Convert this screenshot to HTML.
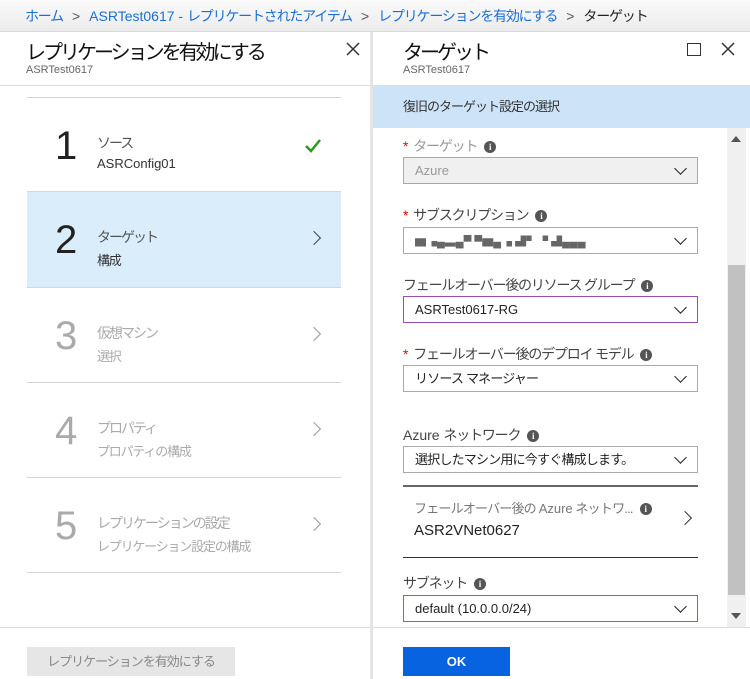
<!DOCTYPE html><html><head><meta charset="utf-8"><style>
*{box-sizing:border-box;margin:0;padding:0}
body{width:750px;height:679px;overflow:hidden;background:#fff;font-family:"Segoe UI","Liberation Sans","Noto Sans CJK JP",sans-serif;position:relative;color:#222}
.a{position:absolute}
.bc{left:0;top:0;width:750px;height:32px;background:linear-gradient(#fafafa,#ececec);border-bottom:1px solid #d8d8d8;font-size:14px;letter-spacing:-1.2px;line-height:32px;padding-left:25px;color:#1a6fd6;white-space:nowrap}
.bc .s{color:#555;margin:0 9px;letter-spacing:0}
.bc .c{color:#222}
.bc .l{letter-spacing:0}
.h1{font-size:20px;color:#111;letter-spacing:-3px}
.sub{font-size:11px;color:#666}
.step{left:27px;width:314px;height:95px;border-top:1px solid #d6d6d6}
.num{position:absolute;left:28px;top:24px;font-size:40px;line-height:48px}
.t1{position:absolute;left:70px;top:35px;font-size:14px;letter-spacing:-2px;color:#555}
.t2{position:absolute;left:70px;top:58px;font-size:13px;letter-spacing:-1.2px;color:#333}
.gr .num,.gr .t1,.gr .t2{color:#aaa}
.chev{position:absolute;left:282px;top:41px;width:10px;height:10px;border-right:1.5px solid #444;border-top:1.5px solid #444;transform:rotate(45deg)}
.gr .chev{border-color:#999}
.lbl{left:403px;font-size:14px;letter-spacing:-1.2px;color:#444}
.lbl .st{color:#e00;margin-right:6px}
.i{display:inline-block;width:12px;height:12px;border-radius:50%;background:#555;color:#fff;font-size:9px;line-height:12px;text-align:center;font-weight:bold;margin-left:7px;vertical-align:1px;letter-spacing:0;font-family:"Liberation Serif",serif}
.sel{left:403px;width:295px;height:27px;border:1px solid #aaa;font-size:13px;letter-spacing:-0.8px;line-height:25px;padding-left:11px;color:#222}
.dn{position:absolute;right:12px;top:6px;width:9px;height:9px;border-right:1.5px solid #222;border-bottom:1.5px solid #222;transform:rotate(45deg)}
</style></head><body>
<div class="a bc">ホーム<span class="s">&gt;</span><span class="l">ASRTest0617 - </span>レプリケートされたアイテム<span class="s">&gt;</span>レプリケーションを有効にする<span class="s">&gt;</span><span class="c">ターゲット</span></div>

<div class="a" style="left:370px;top:32px;width:3px;height:647px;background:#e4e4e4"></div>
<div class="a h1" style="left:26px;top:36px">レプリケーションを有効にする</div>
<div class="a sub" style="left:26px;top:64px">ASRTest0617</div>
<svg class="a" style="left:346px;top:42px" width="14" height="14"><path d="M1 1L13 13M13 1L1 13" stroke="#333" stroke-width="1.5"/></svg>
<div class="a" style="left:0;top:85px;width:370px;height:1px;background:#ddd"></div>
<div class="a step" style="top:97px"><div class="num">1</div><div class="t1">ソース</div><div class="t2" style="letter-spacing:0">ASRConfig01</div>
<svg style="position:absolute;left:277px;top:40px" width="18" height="16"><path d="M2 8L7 13L16 2" stroke="#2a9a1a" stroke-width="2.5" fill="none"/></svg></div>
<div class="a step" style="top:191px;background:#d9edfb;height:96px"><div class="num">2</div><div class="t1">ターゲット</div><div class="t2">構成</div><div class="chev"></div></div>
<div class="a step gr" style="top:287px"><div class="num">3</div><div class="t1">仮想マシン</div><div class="t2">選択</div><div class="chev"></div></div>
<div class="a step gr" style="top:382px"><div class="num">4</div><div class="t1">プロパティ</div><div class="t2">プロパティの構成</div><div class="chev"></div></div>
<div class="a step gr" style="top:477px"><div class="num">5</div><div class="t1">レプリケーションの設定</div><div class="t2">レプリケーション設定の構成</div><div class="chev"></div></div>
<div class="a" style="left:27px;top:572px;width:314px;height:1px;background:#d6d6d6"></div>
<div class="a" style="left:0;top:627px;width:370px;height:1px;background:#ddd"></div>
<div class="a" style="left:27px;top:647px;width:208px;height:29px;background:#e6e6e6;color:#888;font-size:13px;letter-spacing:-1px;line-height:29px;text-align:center">レプリケーションを有効にする</div>

<div class="a h1" style="left:403px;top:36px">ターゲット</div>
<div class="a sub" style="left:403px;top:64px">ASRTest0617</div>
<div class="a" style="left:687px;top:43px;width:14px;height:13px;border:1.5px solid #333"></div>
<svg class="a" style="left:721px;top:42px" width="14" height="14"><path d="M1 1L13 13M13 1L1 13" stroke="#333" stroke-width="1.5"/></svg>
<div class="a" style="left:373px;top:85px;width:377px;height:43px;background:#cde3f8;font-size:13px;letter-spacing:-1px;line-height:43px;padding-left:30px;color:#333">復旧のターゲット設定の選択</div>
<div class="a" style="left:727px;top:128px;width:19px;height:499px;background:#f0f0f0"></div>
<div class="a" style="left:728px;top:265px;width:17px;height:330px;background:#c1c1c1"></div>
<svg class="a" style="left:731px;top:136px" width="10" height="6"><path d="M0 6L5 0L10 6Z" fill="#555"/></svg>
<svg class="a" style="left:731px;top:613px" width="10" height="6"><path d="M0 0L5 6L10 0Z" fill="#555"/></svg>

<div class="a lbl" style="top:136px"><span class="st">*</span><span style="color:#999">ターゲット</span><span class="i">i</span></div>
<div class="a sel" style="top:157px;background:#f0f0f0;color:#999;letter-spacing:0">Azure<div class="dn"></div></div>
<div class="a lbl" style="top:205px"><span class="st">*</span>サブスクリプション<span class="i">i</span></div>
<div class="a sel" style="top:227px"><span style="color:#666;letter-spacing:0;font-size:11px">▆▗▄▃▄▀ ▀▆▄▗ ▟▘▝ ▟▄▄▄</span><div class="dn"></div></div>
<div class="a lbl" style="top:275px">フェールオーバー後のリソース グループ<span class="i">i</span></div>
<div class="a sel" style="top:296px;border-color:#9b4fb5;letter-spacing:0">ASRTest0617-RG<div class="dn"></div></div>
<div class="a lbl" style="top:344px"><span class="st">*</span>フェールオーバー後のデプロイ モデル<span class="i">i</span></div>
<div class="a sel" style="top:365px">リソース マネージャー<div class="dn"></div></div>
<div class="a lbl" style="top:425px"><span style="letter-spacing:0">Azure </span>ネットワーク<span class="i">i</span></div>
<div class="a sel" style="top:446px">選択したマシン用に今すぐ構成します。<div class="dn"></div></div>
<div class="a" style="left:403px;top:485px;width:295px;height:2px;background:#666"></div>
<div class="a" style="left:414px;top:498px;font-size:13px;letter-spacing:-0.8px;color:#777">フェールオーバー後の <span style="letter-spacing:0">Azure</span> ネットワ...<span class="i">i</span></div>
<div class="a" style="left:414px;top:522px;font-size:15px;color:#222">ASR2VNet0627</div>
<div class="a" style="left:680px;top:513px;width:10px;height:10px;border-right:1.5px solid #333;border-top:1.5px solid #333;transform:rotate(45deg)"></div>
<div class="a" style="left:403px;top:557px;width:295px;height:1px;background:#333"></div>
<div class="a lbl" style="top:573px">サブネット<span class="i">i</span></div>
<div class="a sel" style="top:595px;border-color:#2b88d8;letter-spacing:0">default (10.0.0.0/24)<div class="dn"></div></div>
<div class="a" style="left:373px;top:627px;width:377px;height:1px;background:#ddd"></div>
<div class="a" style="left:403px;top:647px;width:107px;height:29px;background:#0863e0;color:#fff;font-weight:bold;font-size:13px;line-height:29px;text-align:center">OK</div>
</body></html>
